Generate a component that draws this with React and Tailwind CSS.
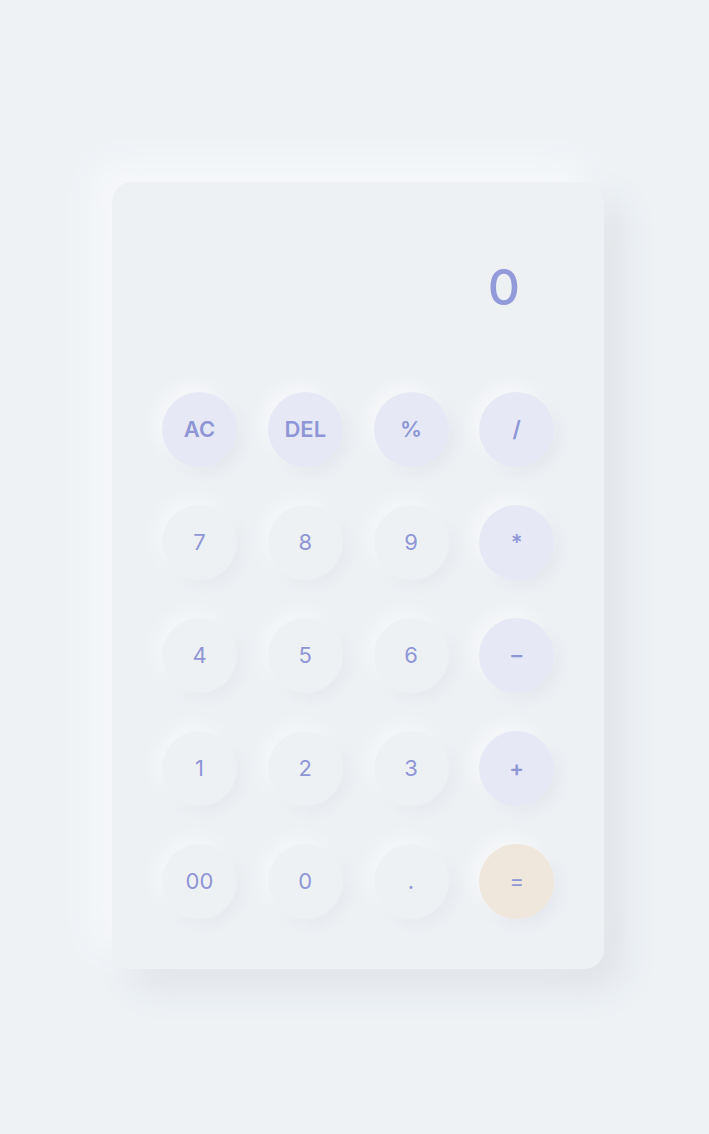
import React, { useState } from 'react'

const keys = [
    { label: 'AC', type: 'op' },
    { label: 'DEL', type: 'op' },
    { label: '%', type: 'op' },
    { label: '/', type: 'op' },
    { label: '7', type: 'num' },
    { label: '8', type: 'num' },
    { label: '9', type: 'num' },
    { label: '*', type: 'op' },
    { label: '4', type: 'num' },
    { label: '5', type: 'num' },
    { label: '6', type: 'num' },
    { label: '-', type: 'op' },
    { label: '1', type: 'num' },
    { label: '2', type: 'num' },
    { label: '3', type: 'num' },
    { label: '+', type: 'op' },
    { label: '00', type: 'num' },
    { label: '0', type: 'num' },
    { label: '.', type: 'num' },
    { label: '=', type: 'eq' },
]

const App = () => {
    const [value, setValue] = useState('0')

    const press = (k) => {
        if (k === 'AC') return setValue('0')
        if (k === 'DEL') return setValue(value.length > 1 ? value.slice(0, -1) : '0')
        if (k === '=') {
            try {
                // eslint-disable-next-line no-new-func
                const r = Function('return (' + value + ')')()
                setValue(String(r))
            } catch (e) {
                setValue('0')
            }
            return
        }
        setValue(value === '0' && k !== '.' ? k : value + k)
    }

    return (
        <div className='min-h-[1134px] bg-[#eef2f5] pt-[182px] pl-[112px] font-["Inter",sans-serif]'>
            <div className='w-[492px] h-[787px] rounded-[20px] bg-[#eef1f4] shadow-[-18px_-18px_36px_#f7f8fa,18px_18px_36px_#dfe2e6] flex flex-col'>
                <div className='h-[210px] flex items-center justify-end pr-[84px]'>
                    <span className='text-[50px] font-medium text-[#929ad9] leading-none'>{value}</span>
                </div>
                <div className='grid grid-cols-4 gap-x-[31px] gap-y-[38px] px-[50px]'>
                    {keys.map((k) => (
                        <button
                            key={k.label}
                            onClick={() => press(k.label)}
                            className={
                                k.type === 'op'
                                    ? 'w-[75px] h-[75px] rounded-full bg-[#e6e9f5] text-[#8e96d6] text-[22px] font-semibold flex items-center justify-center shadow-[-6px_-6px_14px_#f6f7f9,6px_6px_14px_#e4e7ec]'
                                    : k.type === 'eq'
                                        ? 'w-[75px] h-[75px] rounded-full bg-[#f0e7dc] text-[#8e96d6] text-[22px] font-normal flex items-center justify-center shadow-[-6px_-6px_14px_#f6f7f9,6px_6px_14px_#e4e7ec]'
                                        : 'w-[75px] h-[75px] rounded-full bg-[#eef1f4] text-[#8e96d6] text-[22px] font-normal flex items-center justify-center shadow-[-6px_-6px_14px_#f4f6f8,6px_6px_14px_#e6e9ed]'
                            }
                        >
                            {k.label === '-' ? '–' : k.label}
                        </button>
                    ))}
                </div>
            </div>
        </div>
    )
}

export default App
